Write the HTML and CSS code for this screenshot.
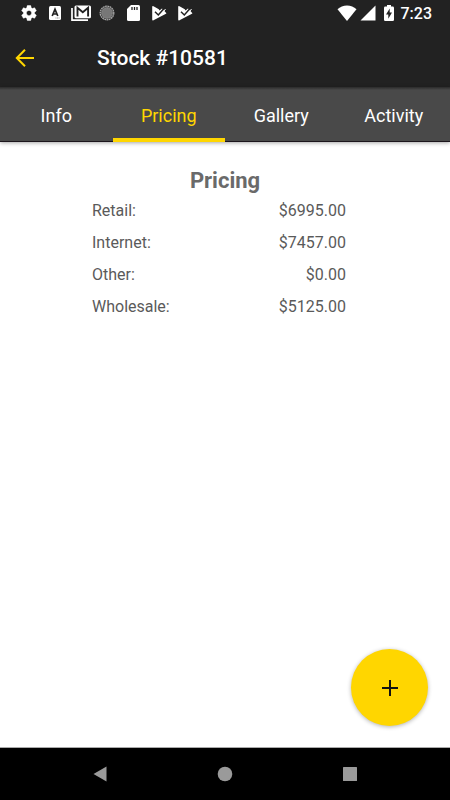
FILE: index.html
```
<!DOCTYPE html>
<html lang="en">
<head>
<meta charset="utf-8">
<meta name="viewport" content="width=device-width, initial-scale=1">
<title>Stock #10581</title>
<link rel="stylesheet" href="styles.css">
</head>
<body>
<div class="status">
  <div class="notices">
    <svg width="18" height="18" viewBox="0 0 24 24"><path fill="#fff" stroke="#fff" stroke-width=".6" d="M19.430 12.980c.04-.32.07-.64.07-.98s-.03-.66-.07-.98l2.110-1.650c.19-.15.24-.42.12-.64l-2-3.460c-.12-.22-.39-.3-.61-.22l-2.490 1c-.52-.4-1.080-.73-1.690-.98l-.38-2.650C14.460 2.180 14.250 2 14 2h-4c-.25 0-.46.18-.49.42l-.38 2.650c-.61.25-1.170.59-1.690.98l-2.490-1c-.23-.09-.49 0-.61.22l-2 3.460c-.13.22-.07.49.12.64l2.110 1.650c-.04.32-.07.65-.07.98s.03.66.07.98l-2.110 1.650c-.19.15-.24.42-.12.64l2 3.460c.12.22.39.3.61.22l2.490-1c.52.4 1.080.73 1.690.98l.38 2.650c.03.24.24.42.49.42h4c.25 0 .46-.18.49-.42l.38-2.650c.61-.25 1.170-.59 1.690-.98l2.490 1c.23.09.49 0 .61-.22l2-3.460c.12-.22.07-.49-.12-.64l-2.110-1.650zM12 15.500c-1.930 0-3.500-1.570-3.500-3.500s1.570-3.500 3.500-3.500 3.500 1.570 3.500 3.500-1.570 3.500-3.500 3.500z"/></svg>
    <svg width="18" height="18" viewBox="0 0 18 18"><rect x="3" y="2" width="12" height="14" rx="1.500" fill="#fff"/><path d="M6.200 12 9 5.300l2.800 6.700M7.200 10h3.600" fill="none" stroke="#222" stroke-width="1.700"/><path d="M9.500 14h4" stroke="#999" stroke-dasharray="1 .5"/></svg>
    <svg class="mail" width="22" height="18" viewBox="0 0 22 18"><path d="M2 4v12.200h16" fill="none" stroke="#fff" stroke-width="1.700"/><rect x="4.500" y="1.500" width="16.500" height="12.700" rx="1.500" fill="#fff"/><path d="M7.500 12.500V3.800l5.300 4.400 5.300-4.400v8.700" fill="none" stroke="#222" stroke-width="1.900"/></svg>
    <svg width="18" height="18" viewBox="0 0 18 18"><circle cx="9" cy="9" r="6" fill="#777"/><circle cx="9" cy="9" r="6.800" fill="none" stroke="#aaa" stroke-width="1.300" stroke-dasharray="1.800 .5"/><circle cx="9" cy="9" r="4.800" fill="none" stroke="#858585" stroke-dasharray="1 1"/></svg>
    <svg width="18" height="18" viewBox="0 0 18 18"><path fill="#fff" d="M7 1h7.500q1.500 0 1.500 1.500v13q0 1.500-1.500 1.500h-10Q3 17 3 15.500V5z"/><path d="M8 3v3M10.500 3v3M13 3v3" stroke="#222" stroke-width="1.300"/></svg>
    <svg width="18" height="18" viewBox="0 0 18 18"><path fill="#fff" d="M2.200 3q0-1.500 1.300-.8L8.800 5.200 9.500 6.500 12 4.500l1.500 1.500L16 8.700q.8.500 0 1L3.500 16.300q-1.300.6-1.300-.8z"/><path d="m5 7.800 3.300 3.200 5.700-6.500" fill="none" stroke="#222" stroke-width="1.500"/><path d="m14 7 1.500-2" stroke="#fff"/></svg>
    <svg width="18" height="18" viewBox="0 0 18 18"><path fill="#fff" d="M2.200 3q0-1.500 1.300-.8L8.800 5.200 9.500 6.500 12 4.500l1.500 1.500L16 8.700q.8.500 0 1L3.500 16.300q-1.300.6-1.300-.8z"/><path d="m5 7.800 3.300 3.200 5.700-6.500" fill="none" stroke="#222" stroke-width="1.500"/><path d="m14 7 1.500-2" stroke="#fff"/></svg>
  </div>
  <div class="system">
    <svg width="20" height="16" viewBox="0 0 20 16"><path fill="#fff" d="M10 16 .5 4.200C3 2 6.400.5 10 .5s7 1.500 9.500 3.700z"/></svg>
    <svg width="16" height="16" viewBox="0 0 16 16"><path fill="#fff" d="M15.500.5v15H.5z"/></svg>
    <svg class="battery" width="10" height="16" viewBox="0 0 10 16"><path fill="#fff" d="M3 0h4v1.600h1.700q1.300 0 1.300 1.300v11.800q0 1.300-1.300 1.300H1.300Q0 16 0 14.700V2.900q0-1.300 1.300-1.300H3z"/><path fill="#222" d="M5.700 3.500v4H8L4.300 13.800V9.500H2z"/></svg>
    <time>7:23</time>
  </div>
</div>
<header class="bar">
  <button class="back" type="button" aria-label="Back"><svg width="20" height="20" viewBox="0 0 20 20"><path d="M19 10H2.500M10 1.800 1.800 10l8.200 8.200" fill="none" stroke="#ffd600" stroke-width="2"/></svg></button>
  <h1>Stock #10581</h1>
</header>
<nav class="tabs">
  <a href="#info">Info</a>
  <a href="#pricing" class="active" aria-current="page">Pricing</a>
  <a href="#gallery">Gallery</a>
  <a href="#activity">Activity</a>
</nav>
<main>
  <h2>Pricing</h2>
  <table>
    <tr><th scope="row">Retail:</th><td>$6995.00</td></tr>
    <tr><th scope="row">Internet:</th><td>$7457.00</td></tr>
    <tr><th scope="row">Other:</th><td>$0.00</td></tr>
    <tr><th scope="row">Wholesale:</th><td>$5125.00</td></tr>
  </table>
  <button class="fab" type="button" aria-label="Add"><svg width="16" height="18" viewBox="0 0 16 18"><path d="M8 1v16M0 9h16" stroke="#111" stroke-width="2"/></svg></button>
</main>
<footer class="keys">
  <button type="button" aria-label="Back"><svg width="16" height="16" viewBox="0 0 16 16"><path fill="#9a9a9a" d="M14.500.5v15L1.500 8z"/></svg></button>
  <button type="button" aria-label="Home"><svg width="16" height="16" viewBox="0 0 16 16"><circle cx="8" cy="8" r="7.300" fill="#9a9a9a"/></svg></button>
  <button type="button" aria-label="Recent apps"><svg width="16" height="16" viewBox="0 0 16 16"><rect x="1" y="1" width="14" height="14" rx=".5" fill="#9a9a9a"/></svg></button>
</footer>
</body>
</html>
```
FILE: styles.css
```
* { box-sizing: border-box; }

body {
  margin: 0;
  min-height: 100vh;
  display: flex;
  flex-direction: column;
  background: #fff;
  font-family: Roboto, "Liberation Sans", sans-serif;
}

svg { display: block; flex: none; }

button {
  border: 0;
  padding: 0;
  background: none;
  display: flex;
  align-items: center;
  justify-content: center;
  cursor: pointer;
}

.status {
  height: 28px;
  padding: 0 18px 0 20px;
  display: flex;
  align-items: center;
  justify-content: space-between;
  background: #222;
  color: #fff;
}

.notices, .system { display: flex; align-items: center; padding-bottom: 2px; }
.notices { gap: 8px; }
.mail { margin: 0 -2px; }
.system { gap: 3px; }
.battery { margin: 0 4px 0 5px; }
time { font-size: 16px; line-height: 20px; font-weight: 500; padding-top: 2px; }

.bar {
  height: 59px;
  padding: 0 15px;
  display: flex;
  align-items: center;
  gap: 62px;
  background: #222;
}
h1 { margin: 0; font-size: 21px; line-height: 28px; font-weight: 500; color: #fff; }

.tabs {
  height: 55px;
  display: grid;
  grid-template-columns: repeat(4, 1fr);
  background: linear-gradient(#1118 0, #1110 3px), #494949;
  border-bottom: 1px solid #1c151c;
  box-shadow: 0 1px 4px rgba(0, 0, 0, .35);
}
.tabs a {
  display: flex;
  align-items: center;
  justify-content: center;
  padding-top: 2px;
  color: #fff;
  font-size: 18px;
  text-decoration: none;
}
.tabs .active {
  color: #ffd600;
  margin-bottom: -1px;
  padding-top: 5px;
  border-bottom: 4px solid #ffd600;
}

main {
  flex: 1;
  position: relative;
  padding-top: 25px;
}
h2 {
  margin: 0;
  font-size: 22px;
  line-height: 28px;
  font-weight: 700;
  color: #6a6a6a;
  text-align: center;
}
table {
  width: calc(100% - 196px);
  margin: 0 104px 0 92px;
  border-collapse: collapse;
  color: #5a5a5a;
  font-size: 16px;
  line-height: 32px;
}
th, td { padding: 0; }
th { font-weight: 400; text-align: left; }
td { text-align: right; }

.fab {
  position: absolute;
  right: 22px;
  bottom: 21px;
  width: 77px;
  height: 77px;
  border-radius: 50%;
  background: #ffd600;
  box-shadow: 0 1px 4px rgba(0, 0, 0, .3);
}

.keys {
  height: 53px;
  padding: 0 38px;
  display: grid;
  grid-template-columns: repeat(3, 1fr);
  background: #000;
  border-top: 1px solid #aaa;
}
```
